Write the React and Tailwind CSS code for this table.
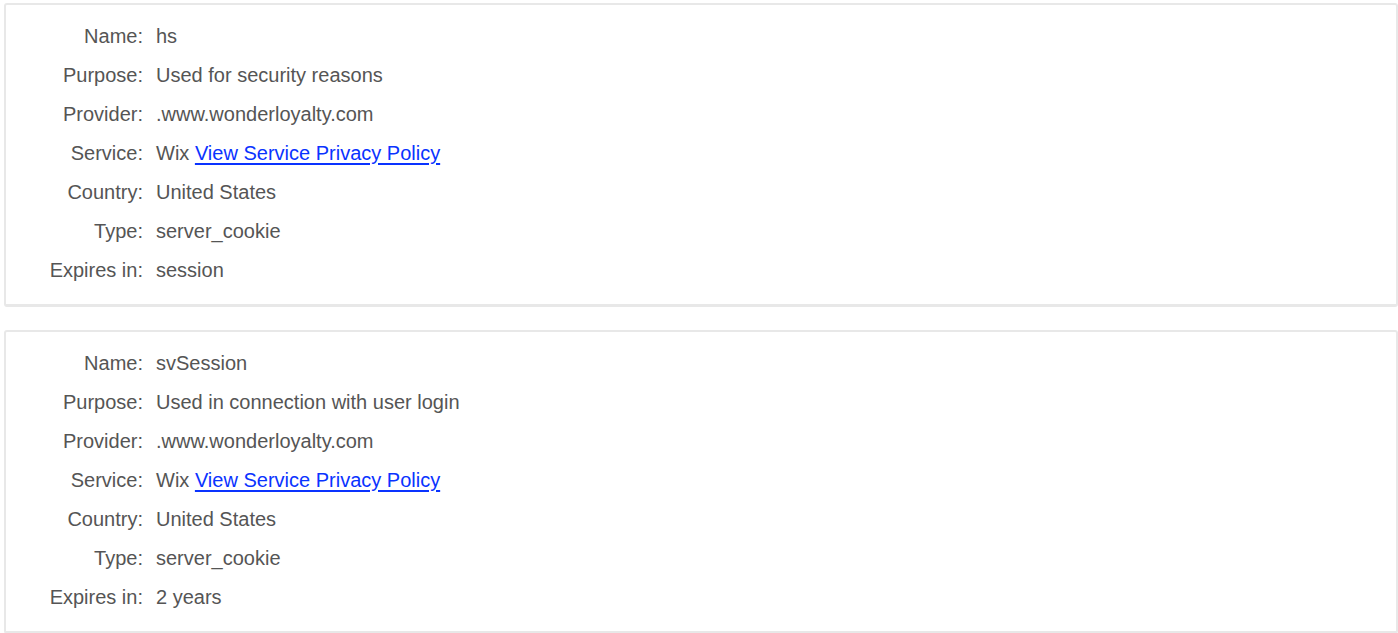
import React from "react";

const cookies = [
  {
    name: "hs",
    purpose: "Used for security reasons",
    provider: ".www.wonderloyalty.com",
    country: "United States",
    type: "server_cookie",
    expires: "session",
  },
  {
    name: "svSession",
    purpose: "Used in connection with user login",
    provider: ".www.wonderloyalty.com",
    country: "United States",
    type: "server_cookie",
    expires: "2 years",
  },
];

const Row = ({ label, children }) => (
  <div className="flex h-[39px] items-center">
    <div className="w-[137px] shrink-0 text-right">{label}</div>
    <div className="pl-[13px]">{children}</div>
  </div>
);

const CookieCard = ({ cookie }) => (
  <div className="rounded-[3px] border-2 border-[#e8e8e8] border-b-[3px] bg-white pt-[11px] pb-[15px]">
    <Row label="Name:">{cookie.name}</Row>
    <Row label="Purpose:">{cookie.purpose}</Row>
    <Row label="Provider:">{cookie.provider}</Row>
    <Row label="Service:">
      Wix{" "}
      <a href="#" className="text-[#0a33ff] underline decoration-2 underline-offset-[3px]">
        View Service Privacy Policy
      </a>
    </Row>
    <Row label="Country:">{cookie.country}</Row>
    <Row label="Type:">{cookie.type}</Row>
    <Row label="Expires in:">{cookie.expires}</Row>
  </div>
);

export default function App() {
  return (
    <div
      className="min-h-screen bg-white pl-[4px] pr-0 pt-[3px] text-[20px] text-[#555555]"
      style={{ fontFamily: '"Liberation Sans", Arial, sans-serif' }}
    >
      <div className="flex flex-col gap-[23px]">
        {cookies.map((c) => (
          <CookieCard key={c.name} cookie={c} />
        ))}
      </div>
    </div>
  );
}
